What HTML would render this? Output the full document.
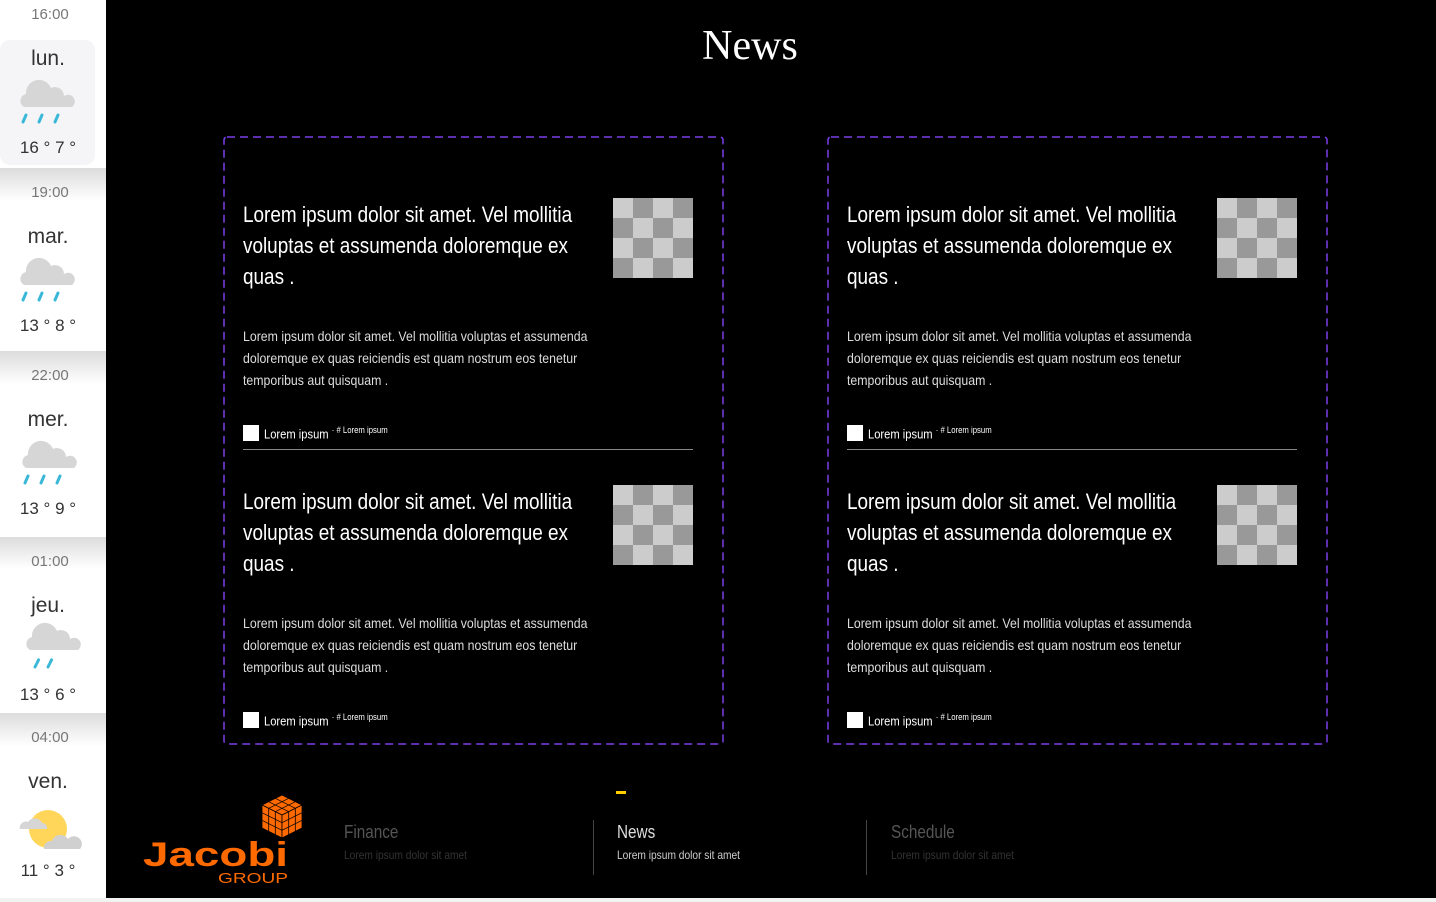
<!DOCTYPE html>
<html><head><meta charset="utf-8"><style>
*{margin:0;padding:0;box-sizing:border-box}
body{width:1436px;height:902px;background:#000;position:relative;overflow:hidden;font-family:"Liberation Sans",sans-serif}
.side{position:absolute;left:0;top:0;width:106px;height:898px;background:#fff}
.cell{position:absolute;left:0;width:106px;background:linear-gradient(#dcdcdc,#fff 18%,#fff);font-family:"Liberation Sans",sans-serif;text-align:center;color:#222}
.cell .t{position:absolute;left:0;width:100px;font-size:15px;color:#777}
.cell .d{position:absolute;left:0;width:96px;font-size:21px;color:#333}
.cell .tp{position:absolute;left:0;width:96px;font-size:17px;color:#333}
.cell svg{position:absolute}
.ttl{position:absolute;top:22px;left:0;width:1500px;text-align:center;color:#fff;font-family:"Liberation Serif",serif;font-size:42px}
.card{position:absolute;top:136px;width:501px;height:609px}
.card>svg{position:absolute;left:0;top:0}
.it{position:absolute;left:20px;width:450px}
.h{position:absolute;left:0;top:1px;width:410px;color:#fff;font-size:22px;line-height:31px;transform:scaleX(.86);transform-origin:0 0}
.img{position:absolute;left:370px;top:0;width:80px;height:80px;background:conic-gradient(#999 25%,#ccc 0 50%,#999 0 75%,#ccc 0) 0 0/40px 40px}
.b{position:absolute;left:0;top:127px;width:445px;color:#ddd;font-size:14px;line-height:22px;transform:scaleX(.88);transform-origin:0 0}
.f{position:absolute;left:0;top:227px;color:#fff;font-size:13px;white-space:nowrap}
.f i{display:inline-block;width:16px;height:16px;background:#fff;vertical-align:-3px;margin-right:5px}
.f span{display:inline-block;transform:scaleX(.86);transform-origin:0 0}
.f sup{font-size:9px}
.hr{position:absolute;left:0;top:251px;width:450px;height:1px;background:#888}
.nav{position:absolute;top:822px;font-size:18px;transform:scaleX(.85);transform-origin:0 0;white-space:nowrap}
.nav small{display:block;font-size:12px;margin-top:5px}
.vl{position:absolute;top:820px;width:1px;height:55px;background:#444}
</style></head><body>
<div class="side">
 <div class="cell" style="top:0;height:168px;background:#fff">
  <div class="t" style="top:6px">16:00</div>
  <div style="position:absolute;left:0;top:40px;width:95px;height:125px;background:#f5f5f7;border-radius:10px"></div>
  <div class="d" style="top:47px">lun.</div>
  <svg style="left:18px;top:76px" width="58" height="50"><path d="M6 31a7 7 0 0 1 2-13a13 13 0 0 1 25-6a9 9 0 0 1 13 8a6 6 0 0 1 8 11z" fill="#d6d6d6"/><g stroke="#3bb8d8" stroke-width="3" stroke-linecap="round"><path d="M5 46l3-7M21 46l3-7M37 46l3-7"/></g></svg>
  <div class="tp" style="top:138px">16 ° 7 °</div>
 </div>
 <div class="cell" style="top:168px;height:183px">
  <div class="t" style="top:16px">19:00</div>
  <div class="d" style="top:57px">mar.</div>
  <svg style="left:18px;top:86px" width="58" height="50"><path d="M6 31a7 7 0 0 1 2-13a13 13 0 0 1 25-6a9 9 0 0 1 13 8a6 6 0 0 1 8 11z" fill="#d6d6d6"/><g stroke="#3bb8d8" stroke-width="3" stroke-linecap="round"><path d="M5 46l3-7M21 46l3-7M37 46l3-7"/></g></svg>
  <div class="tp" style="top:148px">13 ° 8 °</div>
 </div>
 <div class="cell" style="top:351px;height:186px">
  <div class="t" style="top:16px">22:00</div>
  <div class="d" style="top:57px">mer.</div>
  <svg style="left:20px;top:86px" width="58" height="50"><path d="M6 31a7 7 0 0 1 2-13a13 13 0 0 1 25-6a9 9 0 0 1 13 8a6 6 0 0 1 8 11z" fill="#d6d6d6"/><g stroke="#3bb8d8" stroke-width="3" stroke-linecap="round"><path d="M5 46l3-7M21 46l3-7M37 46l3-7"/></g></svg>
  <div class="tp" style="top:148px">13 ° 9 °</div>
 </div>
 <div class="cell" style="top:537px;height:176px">
  <div class="t" style="top:16px">01:00</div>
  <div class="d" style="top:57px">jeu.</div>
  <svg style="left:24px;top:82px" width="58" height="50"><path d="M6 31a7 7 0 0 1 2-13a13 13 0 0 1 25-6a9 9 0 0 1 13 8a6 6 0 0 1 8 11z" fill="#d6d6d6"/><g stroke="#3bb8d8" stroke-width="3" stroke-linecap="round" stroke-dasharray="3 2"><path d="M11 48l4-8M24 48l4-8"/></g></svg>
  <div class="tp" style="top:148px">13 ° 6 °</div>
 </div>
 <div class="cell" style="top:713px;height:185px">
  <div class="t" style="top:16px">04:00</div>
  <div class="d" style="top:57px">ven.</div>
  <svg style="left:18px;top:94px" width="64" height="50"><circle cx="30" cy="22" r="19" fill="#ffd65a"/><path d="M2 22a6 6 0 0 1 8-7a8 8 0 0 1 14 1a5 5 0 0 1 5 6z" fill="#d6d6d6"/><path d="M26 42a7 7 0 0 1 8-8a9 9 0 0 1 16-2a7 7 0 0 1 12 10z" fill="#d0d0d0"/></svg>
  <div class="tp" style="top:148px">11 ° 3 °</div>
 </div>
</div>
<div style="position:absolute;left:0;top:898px;width:1436px;height:4px;background:#f2f2f2"></div>
<div class="ttl">News</div>

<div class="card" style="left:223px">
 <svg width="501" height="609"><rect x="1" y="1" width="499" height="607" rx="3" fill="none" stroke="#7a3fe8" stroke-width="1.5" stroke-dasharray="8 5"/></svg>
 <div class="it" style="top:62px"><div class="h">Lorem ipsum dolor sit amet. Vel mollitia voluptas et assumenda doloremque ex quas .</div><div class="img"></div><div class="b">Lorem ipsum dolor sit amet. Vel mollitia voluptas et assumenda doloremque ex quas reiciendis est quam nostrum eos tenetur temporibus aut quisquam .</div><div class="f"><i></i><span>Lorem ipsum <sup>· # Lorem ipsum</sup></span></div><div class="hr"></div></div>
 <div class="it" style="top:349px"><div class="h">Lorem ipsum dolor sit amet. Vel mollitia voluptas et assumenda doloremque ex quas .</div><div class="img"></div><div class="b">Lorem ipsum dolor sit amet. Vel mollitia voluptas et assumenda doloremque ex quas reiciendis est quam nostrum eos tenetur temporibus aut quisquam .</div><div class="f"><i></i><span>Lorem ipsum <sup>· # Lorem ipsum</sup></span></div></div>
</div>
<div class="card" style="left:827px">
 <svg width="501" height="609"><rect x="1" y="1" width="499" height="607" rx="3" fill="none" stroke="#7a3fe8" stroke-width="1.5" stroke-dasharray="8 5"/></svg>
 <div class="it" style="top:62px"><div class="h">Lorem ipsum dolor sit amet. Vel mollitia voluptas et assumenda doloremque ex quas .</div><div class="img"></div><div class="b">Lorem ipsum dolor sit amet. Vel mollitia voluptas et assumenda doloremque ex quas reiciendis est quam nostrum eos tenetur temporibus aut quisquam .</div><div class="f"><i></i><span>Lorem ipsum <sup>· # Lorem ipsum</sup></span></div><div class="hr"></div></div>
 <div class="it" style="top:349px"><div class="h">Lorem ipsum dolor sit amet. Vel mollitia voluptas et assumenda doloremque ex quas .</div><div class="img"></div><div class="b">Lorem ipsum dolor sit amet. Vel mollitia voluptas et assumenda doloremque ex quas reiciendis est quam nostrum eos tenetur temporibus aut quisquam .</div><div class="f"><i></i><span>Lorem ipsum <sup>· # Lorem ipsum</sup></span></div></div>
</div>

<svg style="position:absolute;left:140px;top:793px" width="170" height="95">
 <g fill="#ff6a00" stroke="#000" stroke-width="0.8">
  <path d="M142 2L162 12L142 22L122 12Z"/><path d="M122 12L142 22L142 45L122 35Z"/><path d="M142 22L162 12L162 35L142 45Z"/>
 </g>
 <g stroke="#000" stroke-width="0.8" fill="none">
  <path d="M128.7 8.7L148.7 18.7M135.3 5.3L155.3 15.3M135.3 18.7L155.3 8.7M128.7 15.3L148.7 5.3"/>
  <path d="M122 19.7L142 29.7M122 27.3L142 37.3M128.7 15.3V38.3M135.3 18.7V41.7"/>
  <path d="M142 29.7L162 19.7M142 37.3L162 27.3M148.7 18.7V41.7M155.3 15.3V38.3"/>
 </g>
 <text x="3" y="73" font-family="Liberation Sans" font-weight="bold" font-size="34" fill="#ff6a00" textLength="145" lengthAdjust="spacingAndGlyphs">Jacobi</text>
 <text x="78" y="90" font-family="Liberation Sans" font-size="15" fill="#ff6a00" textLength="70" lengthAdjust="spacingAndGlyphs">GROUP</text>
</svg>

<div style="position:absolute;left:616px;top:791px;width:10px;height:3px;background:#ffcc00"></div>
<div class="nav" style="left:344px;color:#555">Finance<small style="color:#333">Lorem ipsum dolor sit amet</small></div>
<div class="vl" style="left:593px"></div>
<div class="nav" style="left:617px;color:#ddd">News<small style="color:#ccc">Lorem ipsum dolor sit amet</small></div>
<div class="vl" style="left:866px"></div>
<div class="nav" style="left:891px;color:#555">Schedule<small style="color:#333">Lorem ipsum dolor sit amet</small></div>
</body></html>
